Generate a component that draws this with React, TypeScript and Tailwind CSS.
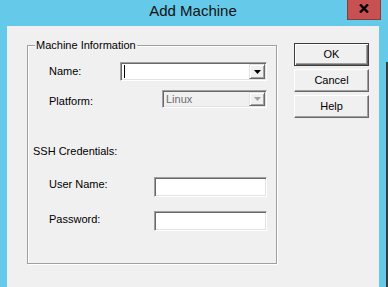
import React from "react";

const sunken =
  "border border-t-[#a0a0a0] border-l-[#a0a0a0] border-r-white border-b-white shadow-[inset_1px_1px_0_#696969,inset_-1px_-1px_0_#e3e3e3]";
const raised =
  "border border-t-[#e3e3e3] border-l-[#e3e3e3] border-r-[#696969] border-b-[#696969] shadow-[inset_1px_1px_0_#ffffff,inset_-1px_-1px_0_#a0a0a0]";

function DropButton({ disabled }: { disabled?: boolean }) {
  return (
    <div className={`w-[16px] h-full bg-[#f0f0f0] flex items-center justify-center ${raised}`}>
      <svg width="7" height="4" viewBox="0 0 7 4">
        <path d="M0 0H7L3.5 4Z" fill={disabled ? "#a0a0a0" : "#000"} />
      </svg>
    </div>
  );
}

function Btn({ label, def }: { label: string; def?: boolean }) {
  return (
    <div
      className={`w-[75px] h-[23px] flex items-center justify-center bg-[#f0f0f0] text-black ${
        def
          ? "border border-[#3c3c3c] shadow-[inset_1px_1px_0_#ffffff,inset_-1px_-1px_0_#696969,inset_-2px_-2px_0_#a0a0a0]"
          : "border border-t-[#ffffff] border-l-[#ffffff] border-r-[#696969] border-b-[#696969] shadow-[inset_-1px_-1px_0_#a0a0a0]"
      }`}
    >
      {label}
    </div>
  );
}

export default function App() {
  return (
    <div
      className="w-[388px] h-[287px] flex bg-[#65c9ea] overflow-hidden text-[11px] leading-[13px] text-black"
      style={{ fontFamily: '"Liberation Sans", Arial, sans-serif' }}
    >
      <div className="w-[386px] flex flex-col">
        <div className="h-[26px] relative flex justify-center">
          <span className="mt-[1px] text-[15px] leading-[20px] text-[#111]">Add Machine</span>
          <div className="absolute left-[347px] top-0 w-[34px] h-[20px] bg-[#c75050] border border-t-0 border-[#8a3b3b] flex items-start justify-center pt-[4px]">
            <svg width="10" height="9" viewBox="0 0 10 9">
              <path d="M1 0.5L9 8.5M9 0.5L1 8.5" stroke="#000" strokeWidth="2.4" />
            </svg>
          </div>
        </div>
        <div className="ml-[7px] w-[372px] flex-1 bg-[#f0f0f0] flex pl-[20px] pt-[19px]">
          <div className="w-[250px] h-[219px] border border-[#a0a0a0] shadow-[inset_1px_1px_0_#fff,1px_1px_0_#fff] flex flex-col">
            <span className="block w-fit -mt-[7px] ml-[7px] px-[1px] bg-[#f0f0f0]">Machine Information</span>
            <div className="flex items-start h-[19px] mt-[10px]">
              <span className="w-[92px] pl-[21px] mt-[3px]">Name:</span>
              <div className={`w-[147px] h-[19px] bg-white flex items-stretch p-[1px] ${sunken}`}>
                <div className="flex-1 flex items-center pl-[2px]">
                  <div className="w-[1px] h-[13px] bg-black" />
                </div>
                <DropButton />
              </div>
            </div>
            <div className="flex items-start h-[18px] mt-[9px]">
              <span className="w-[134px] pl-[21px] mt-[5px]">Platform:</span>
              <div className={`w-[105px] h-[18px] bg-[#f0f0f0] flex items-stretch p-[1px] ${sunken}`}>
                <div className="flex-1 flex items-center pl-[2px] text-[#6d6d6d]">Linux</div>
                <DropButton disabled />
              </div>
            </div>
            <span className="mt-[37px] pl-[5px]">SSH Credentials:</span>
            <div className="flex items-start mt-[19px]">
              <span className="w-[126px] pl-[21px] mt-[1px]">User Name:</span>
              <div className={`w-[113px] h-[20px] bg-white ${sunken}`} />
            </div>
            <div className="flex items-start mt-[14px]">
              <span className="w-[126px] pl-[21px] mt-[2px]">Password:</span>
              <div className={`w-[113px] h-[20px] bg-white ${sunken}`} />
            </div>
          </div>
          <div className="ml-[17px] -mt-[2px] flex flex-col gap-[3px]">
            <Btn label="OK" def />
            <Btn label="Cancel" />
            <Btn label="Help" />
          </div>
        </div>
      </div>
      <div className="w-[2px] flex flex-col">
        <div className="h-[62px]" />
        <div className="flex-1 bg-[#3a3a3a]" />
      </div>
    </div>
  );
}
